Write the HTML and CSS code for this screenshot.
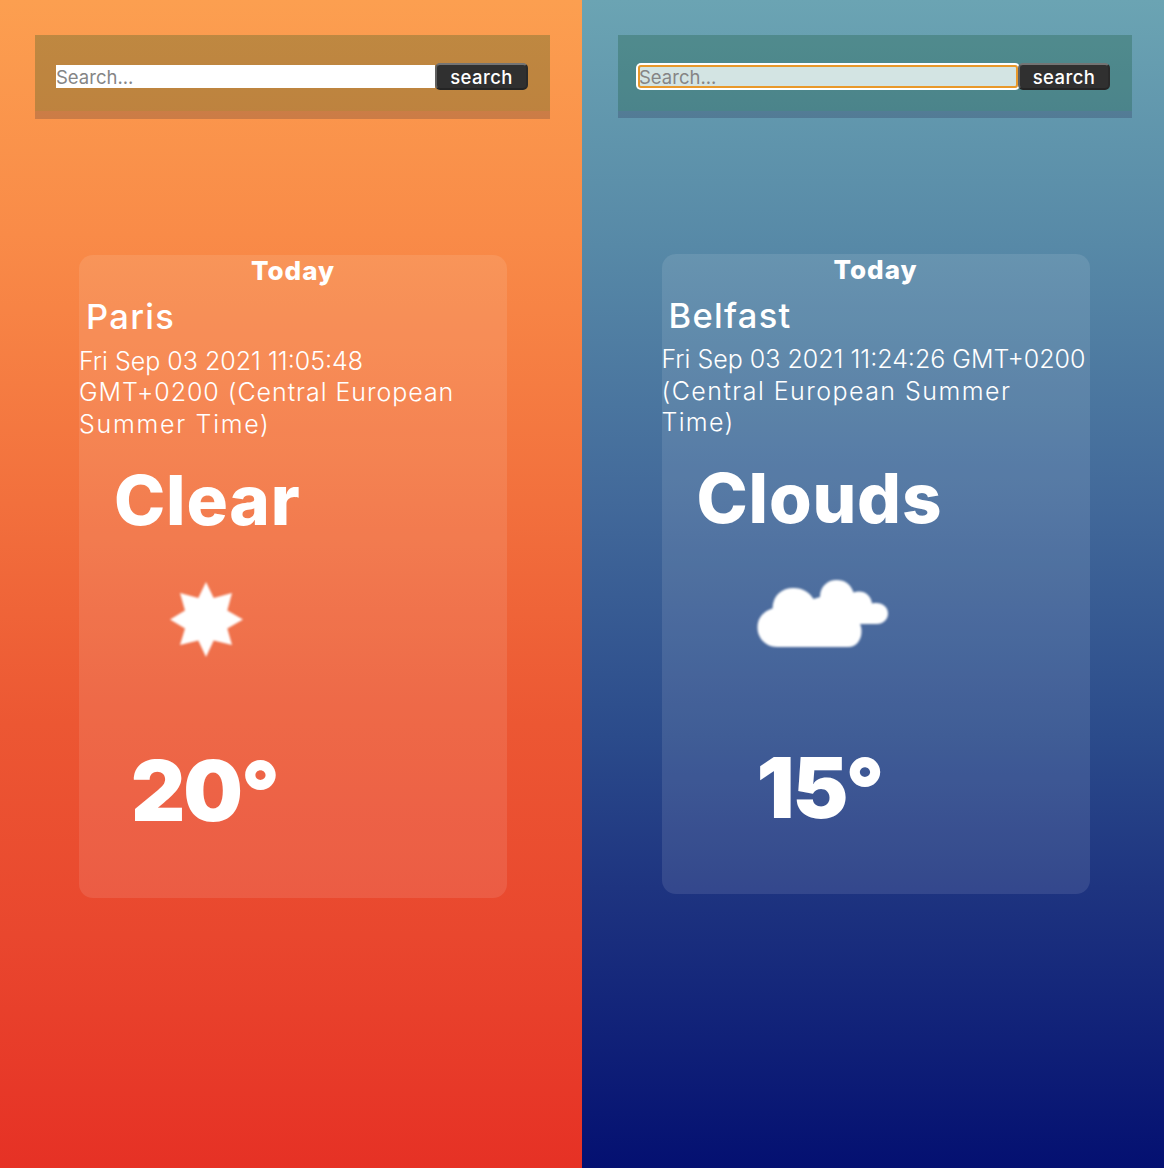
FILE: index.html
```
<!DOCTYPE html>
<html lang="en">
<head>
<meta charset="utf-8">
<title>Weather</title>
<link rel="stylesheet" href="styles.css">
</head>
<body>
<main class="screens">
  <section class="screen warm">
    <form class="search-box">
      <input class="search-input" type="text" placeholder="Search...">
      <button class="search-button" type="button">search</button>
    </form>
    <article class="card">
      <h2 class="today">Today</h2>
      <h1 class="city">Paris</h1>
      <p class="date"><span class="d1">Fri Sep 03 2021 11:05:48</span><span class="d2">GMT+0200 (Central European</span><span class="d3">Summer Time)</span></p>
      <p class="condition">Clear</p>
      <svg class="icon" viewBox="0 0 240 100" aria-hidden="true">
        <path fill="#fff" d="M127 11 134.7 27 153 22 148.300 39.500 164 48.500 148.300 57.500 153 74 134.700 69.500 127 86 119.300 69.500 101 74 106 57.500 91 48.500 106 39.500 101 22 119.300 27Z"/>
      </svg>
      <p class="temp">20°</p>
    </article>
  </section>
  <section class="screen cold">
    <form class="search-box">
      <input class="search-input focused" type="text" placeholder="Search...">
      <button class="search-button" type="button">search</button>
    </form>
    <article class="card">
      <h2 class="today">Today</h2>
      <h1 class="city">Belfast</h1>
      <p class="date"><span class="d1">Fri Sep 03 2021 11:24:26 GMT+0200</span><span class="d2">(Central European Summer</span><span class="d3">Time)</span></p>
      <p class="condition">Clouds</p>
      <svg class="icon" viewBox="0 0 240 100" aria-hidden="true">
        <path fill="#fff" d="M115.500 78C104 78 95.500 69.500 95.500 58.500C95.500 48.500 102 42 110.500 39.500C111 26 120 19 131.500 19C141 19 147 23 151.500 30L158 28C158 17 166 11 174.500 11C183 11 189 15.500 191.500 23.500C200 20 209 25 210 34.500C219 32.500 226 37 226 44.500C226 50.500 221 55 215 55L198 55C202 64 198 78 186 78Z"/>
      </svg>
      <p class="temp">15°</p>
    </article>
  </section>
</main>
</body>
</html>
```
FILE: styles.css
```
* { box-sizing: border-box; }
body {
  margin: 0;
  font-family: Inter, "Open Sans", sans-serif;
  color: #fff;
}
h1, h2, p { margin: 0; white-space: nowrap; }
.screens { display: flex; height: 1168px; overflow: hidden; }
.screen { width: 582px; height: 1168px; padding-top: 35px; }
.warm { background: linear-gradient(#fc9f50 0%, #f98b48 20%, #f2703d 43%, #ec5733 62%, #e9472e 80%, #e63125 100%); }
.cold { background: linear-gradient(#6ba4b3 0%, #5789a7 21%, #42699a 43%, #2b4b8b 63%, #1e3480 76%, #041071 100%); }

.search-box {
  display: flex;
  align-items: center;
  width: 515px;
  height: 76px;
  margin: 0 0 0 35px;
  padding: 7px 0 0 21px;
  background: rgba(8, 74, 22, .25);
  box-shadow: 0 8px 0 rgba(38, 38, 48, .22);
}
.cold .search-box {
  width: 514px;
  margin-left: 36px;
  padding-left: 20px;
  background: rgba(12, 78, 40, .26);
  box-shadow: 0 7px 0 rgba(38, 38, 78, .25);
}
.search-input {
  width: 379px;
  height: 23px;
  padding: 1px 0 0;
  border: 0;
  outline: 0;
  border-radius: 0;
  font: 400 18.5px/22px Inter, sans-serif;
  background: #fff;
}
.search-input::placeholder { color: #858585; }
.search-input.focused {
  width: 380px;
  padding-left: 1px;
  background: #d3e4e3;
  border-radius: 3px;
  box-shadow: inset 0 0 0 2px #e8982a, 0 0 0 2px #fff;
}
.search-button {
  width: 93px;
  height: 27px;
  padding: 0;
  border: 2px solid;
  border-color: #747474 #292929 #242424 #606060;
  border-radius: 5px;
  background: #303030;
  color: #fff;
  font: 500 18.500px/22px Inter, sans-serif;
  letter-spacing: .4px;
}
.cold .search-button { width: 92px; }

.card {
  width: 428px;
  height: 643px;
  margin: 144px 0 0 79px;
  border-radius: 14px;
  background: rgba(255, 255, 255, .1);
}
.cold .card { height: 640px; margin: 143px 0 0 79.500px; }
.today { font-size: 26px; font-weight: 800; line-height: 31px; letter-spacing: 1px; text-align: center; }
.city { margin-top: 8.500px; padding-left: 7px; font-size: 34.500px; font-weight: 550; line-height: 44px; letter-spacing: 1.300px; }
.date { margin-top: 7px; font-size: 25px; font-weight: 350; line-height: 31.500px; }
.date span { display: block; }
.warm .d2 { letter-spacing: .95px; }
.warm .d3 { letter-spacing: 1.700px; }
.cold .d2 { letter-spacing: 1.450px; }
.cold .d3 { letter-spacing: 1.300px; }
.condition { margin-top: 21px; padding-left: 35px; font-size: 69px; font-weight: 800; line-height: 79px; letter-spacing: .8px; }
.icon { display: block; width: 240px; height: 100px; margin-top: 31px; filter: blur(1px); }
.temp { margin-top: 69.500px; padding-left: 52px; font-size: 84px; font-weight: 900; line-height: 100px; letter-spacing: -2px; }
.cold .date { margin-top: 6.500px; }
.cold .condition { margin-top: 20px; }
.cold .temp { margin-top: 69px; padding-left: 95px; }
```
